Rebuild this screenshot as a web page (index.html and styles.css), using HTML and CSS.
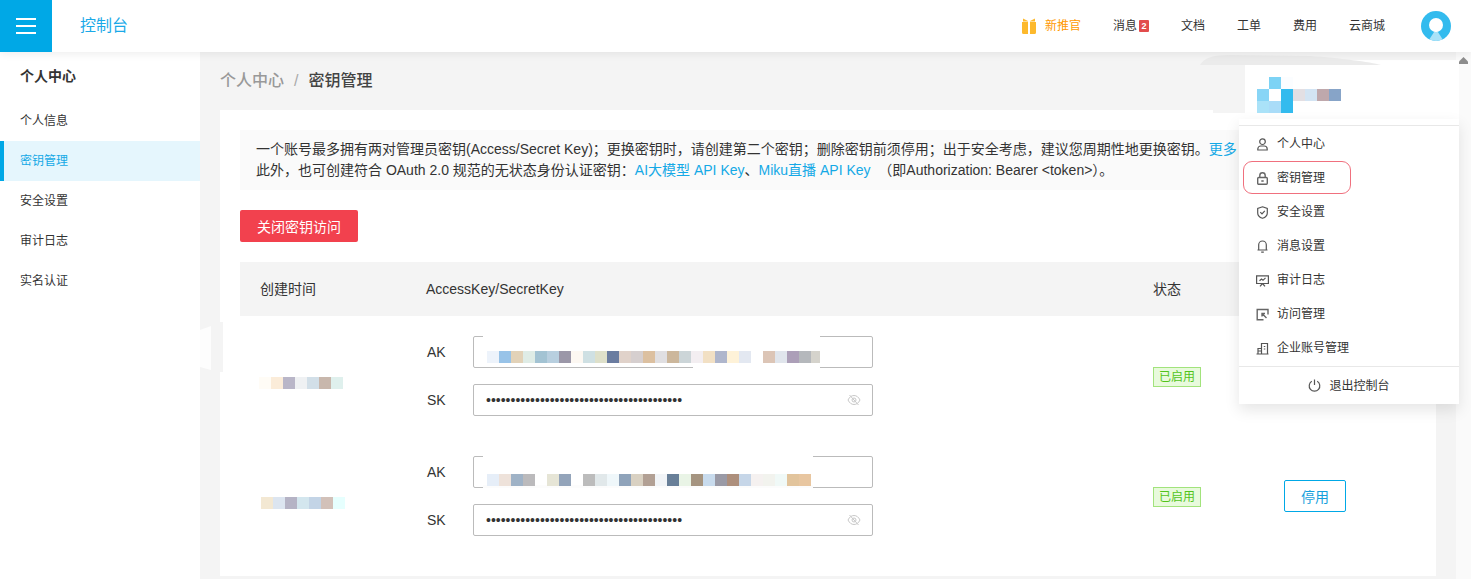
FILE: index.html
```html
<!DOCTYPE html>
<html lang="zh-CN">
<head>
<meta charset="utf-8">
<title>密钥管理</title>
<link rel="stylesheet" href="styles.css">
</head>
<body>
<header class="topbar">
  <button class="burger" aria-label="菜单"><i></i><i></i><i></i></button>
  <a class="brand">控制台</a>
  <nav class="topnav">
    <a class="promo">
      <svg width="14" height="16" viewBox="0 0 14 16"><path fill="#fdb92c" d="M0 4h6v12H1.500A1.500 1.500 0 0 1 0 14.500zM8 4h6v10.500a1.500 1.500 0 0 1-1.500 1.500H8zM1 .5l5 2.500v.5H1zM13 .5L8 3v.5h5z"/></svg>
      新推官
    </a>
    <a class="msg">消息<b class="badge">2</b></a>
    <a>文档</a>
    <a>工单</a>
    <a>费用</a>
    <a>云商城</a>
    <svg class="avatar" width="30" height="30" viewBox="0 0 30 30">
      <defs><clipPath id="ac"><circle cx="15" cy="15" r="15"/></clipPath></defs>
      <circle cx="15" cy="15" r="15" fill="#33bbee"/>
      <path clip-path="url(#ac)" d="M15 18L24 32H6z" fill="#a9e2f8"/>
      <circle cx="15" cy="14" r="7" fill="#fff"/>
    </svg>
  </nav>
</header>

<div class="layout">
  <aside class="sidebar">
    <h2 class="side-title">个人中心</h2>
    <a class="side-item">个人信息</a>
    <a class="side-item active">密钥管理</a>
    <a class="side-item">安全设置</a>
    <a class="side-item">审计日志</a>
    <a class="side-item">实名认证</a>
  </aside>

  <main class="main">
    <div class="crumbs"><span class="crumb-parent">个人中心</span><span class="crumb-sep">/</span><span class="crumb-current">密钥管理</span></div>
    <section class="card">
      <div class="notice">
        <p>一个账号最多拥有两对管理员密钥(Access/Secret Key)；更换密钥时，请创建第二个密钥；删除密钥前须停用；出于安全考虑，建议您周期性地更换密钥。<a>更多</a></p>
        <p>此外，也可创建符合 OAuth 2.0 规范的无状态身份认证密钥：<a>AI大模型 API Key</a>、<a>Miku直播 API Key</a> &nbsp;（即Authorization: Bearer &lt;token&gt;）。</p>
      </div>
      <button class="btn-danger">关闭密钥访问</button>

      <div class="table">
        <div class="tr head">
          <div>创建时间</div>
          <div>AccessKey/SecretKey</div>
          <div>状态</div>
          <div></div>
        </div>

        <div class="tr">
          <div class="date">
            <svg width="84" height="12"><rect x="0" width="12" height="12" fill="#fffcf6"/><rect x="12" width="12" height="12" fill="#fbecd9"/><rect x="24" width="12" height="12" fill="#b9b6c8"/><rect x="36" width="12" height="12" fill="#eff1f3"/><rect x="48" width="12" height="12" fill="#d2dfe8"/><rect x="60" width="12" height="12" fill="#c8b7ac"/><rect x="72" width="12" height="12" fill="#dff0ed"/></svg>
          </div>
          <div class="keys">
            <div class="key-row"><label>AK</label>
              <div class="field">
                <i class="mask mask-top"></i><i class="mask mask-bottom-a"></i>
                <svg class="blur" width="333" height="12"><rect x="0" width="12" height="12" fill="#edf3fb"/><rect x="12" width="12" height="12" fill="#98c3e8"/><rect x="24" width="12" height="12" fill="#e2d2b8"/><rect x="36" width="12" height="12" fill="#dfece6"/><rect x="48" width="12" height="12" fill="#a3c3d3"/><rect x="60" width="12" height="12" fill="#b8cfdf"/><rect x="72" width="12" height="12" fill="#9b97a8"/><rect x="84" width="12" height="12" fill="#fdf8f2"/><rect x="96" width="12" height="12" fill="#cfe0e3"/><rect x="108" width="12" height="12" fill="#dee0ca"/><rect x="120" width="12" height="12" fill="#6a7ca0"/><rect x="132" width="12" height="12" fill="#e0d2ca"/><rect x="144" width="12" height="12" fill="#d6cfcf"/><rect x="156" width="12" height="12" fill="#dcc0a0"/><rect x="168" width="12" height="12" fill="#e0dfe2"/><rect x="180" width="12" height="12" fill="#ccb79c"/><rect x="192" width="12" height="12" fill="#ccd5d8"/><rect x="204" width="12" height="12" fill="#f3eef1"/><rect x="216" width="12" height="12" fill="#f2e0c4"/><rect x="228" width="12" height="12" fill="#afb6cc"/><rect x="240" width="12" height="12" fill="#fef2d8"/><rect x="252" width="12" height="12" fill="#e3e8f1"/><rect x="276" width="12" height="12" fill="#dcc5b6"/><rect x="288" width="12" height="12" fill="#e0e5ec"/><rect x="300" width="12" height="12" fill="#ac9fb8"/><rect x="312" width="12" height="12" fill="#b5b8bc"/><rect x="324" width="9" height="12" fill="#d5d3cc"/></svg>
              </div>
            </div>
            <div class="key-row"><label>SK</label>
              <div class="field"><span class="dots">••••••••••••••••••••••••••••••••••••••••</span>
                <svg class="eye" width="14" height="14" viewBox="0 0 14 14"><path d="M1 7c1.500-3 3.500-4.500 6-4.500S11.500 4 13 7c-1.500 3-3.500 4.500-6 4.500S2.500 10 1 7zM2.500 2l9 10"/><circle cx="7" cy="7" r="2"/></svg>
              </div>
            </div>
          </div>
          <div class="status"><span class="tag">已启用</span></div>
          <div class="action"></div>
        </div>

        <div class="tr">
          <div class="date date-b">
            <svg width="84" height="12"><rect x="0" width="12" height="12" fill="#f3e8d3"/><rect x="12" width="12" height="12" fill="#dce5f0"/><rect x="24" width="12" height="12" fill="#b5b3c5"/><rect x="36" width="12" height="12" fill="#d3e6ee"/><rect x="48" width="12" height="12" fill="#c3d4e6"/><rect x="60" width="12" height="12" fill="#d2c1b9"/><rect x="72" width="12" height="12" fill="#e6fffe"/></svg>
          </div>
          <div class="keys">
            <div class="key-row"><label>AK</label>
              <div class="field">
                <i class="mask mask-top-b"></i><i class="mask mask-bottom-b"></i>
                <svg class="blur blur-b" width="324" height="12"><rect x="0" width="12" height="12" fill="#e6eef8"/><rect x="12" width="12" height="12" fill="#eee2da"/><rect x="24" width="12" height="12" fill="#9fb2c6"/><rect x="36" width="12" height="12" fill="#bbbabc"/><rect x="60" width="12" height="12" fill="#e6e5d6"/><rect x="72" width="12" height="12" fill="#93a4ba"/><rect x="96" width="12" height="12" fill="#bcbcbc"/><rect x="108" width="12" height="12" fill="#e1e8ea"/><rect x="120" width="12" height="12" fill="#eff7fa"/><rect x="132" width="12" height="12" fill="#8fa3ba"/><rect x="144" width="12" height="12" fill="#d9d1c2"/><rect x="156" width="12" height="12" fill="#b2a094"/><rect x="168" width="12" height="12" fill="#f1f4f7"/><rect x="180" width="12" height="12" fill="#687f98"/><rect x="192" width="12" height="12" fill="#e9f4e6"/><rect x="204" width="12" height="12" fill="#a59480"/><rect x="216" width="12" height="12" fill="#c8dbed"/><rect x="228" width="12" height="12" fill="#9a9aa6"/><rect x="240" width="12" height="12" fill="#ad8f7c"/><rect x="252" width="12" height="12" fill="#c6d6e8"/><rect x="264" width="12" height="12" fill="#f5f1f0"/><rect x="276" width="12" height="12" fill="#f2f3ee"/><rect x="288" width="12" height="12" fill="#f0f9f7"/><rect x="300" width="12" height="12" fill="#e2c49c"/><rect x="312" width="12" height="12" fill="#e8c6a0"/></svg>
              </div>
            </div>
            <div class="key-row"><label>SK</label>
              <div class="field"><span class="dots">••••••••••••••••••••••••••••••••••••••••</span>
                <svg class="eye" width="14" height="14" viewBox="0 0 14 14"><path d="M1 7c1.500-3 3.500-4.500 6-4.500S11.500 4 13 7c-1.500 3-3.500 4.500-6 4.500S2.500 10 1 7zM2.500 2l9 10"/><circle cx="7" cy="7" r="2"/></svg>
              </div>
            </div>
          </div>
          <div class="status"><span class="tag">已启用</span></div>
          <div class="action"><button class="btn-outline">停用</button></div>
        </div>
      </div>
    </section>
  </main>
  <div class="scrolltrack"></div>
</div>

<!-- Overlays -->
<svg class="arrow-up" width="9" height="7" viewBox="0 0 9 7"><path d="M4.500 0L9 4.500V7H0V4.500z" fill="#8c8c8c"/></svg>
<svg class="menu-swoosh" width="260" height="14" viewBox="0 0 260 14"><rect x="60" y="8" width="199" height="6" fill="#fff"/><path d="M0 13C4 6 12 3 30 3L110 4C140 6 170 10 181 13z" fill="#ebebeb"/></svg>
<div class="card-notch"></div>
<div class="collapse-tab"></div>
<div class="collapse-edge"></div>

<div class="menu">
  <div class="menu-user">
    <svg width="84" height="36"><rect x="12" y="0" width="12" height="12" fill="#7dd3f5"/><rect x="24" y="0" width="12" height="12" fill="#fbfdff"/><rect x="0" y="12" width="12" height="12" fill="#88d5f6"/><rect x="24" y="12" width="12" height="12" fill="#33bbee"/><rect x="36" y="12" width="12" height="12" fill="#e3dfe3"/><rect x="48" y="12" width="12" height="12" fill="#d3e4f3"/><rect x="60" y="12" width="12" height="12" fill="#bfa8ac"/><rect x="72" y="12" width="12" height="12" fill="#87a4c8"/><rect x="0" y="24" width="12" height="12" fill="#aae2f8"/><rect x="12" y="24" width="12" height="12" fill="#a9dcf8"/><rect x="24" y="24" width="12" height="12" fill="#33bbee"/></svg>
  </div>
  <div class="menu-body">
    <ul class="menu-list">
      <li><svg viewBox="0 0 13 13"><circle cx="6.500" cy="3.700" r="2.800"/><path d="M1.800 12v-1a3 3 0 0 1 3-3h3.400a3 3 0 0 1 3 3v1z"/></svg>个人中心</li>
      <li><svg class="thick" viewBox="0 0 13 13"><rect x="1.700" y="5.500" width="9.600" height="6.800" rx="1"/><path d="M3.800 5.500V3.500a2.700 2.700 0 0 1 5.400 0v2M5.300 9h2.400"/></svg>密钥管理</li>
      <li><svg viewBox="0 0 13 13"><path d="M6.500.8L11.300 2.500V7C11.300 9.700 9 11.500 6.500 12.300 4 11.500 1.700 9.700 1.700 7V2.500zM4.300 6.200l1.700 1.700 2.800-3"/></svg>安全设置</li>
      <li><svg viewBox="0 0 13 13"><path d="M2.700 10V4.800a3.800 3.800 0 0 1 7.600 0V10M1.500 10h10M5.200 12.200h2.600"/></svg>消息设置</li>
      <li><svg viewBox="0 0 13 13"><path d="M.6 1.800h11.800v7.700H.6zM6.500 9.500L4 12.300M6.500 9.500L9 12.300M3.500 6.800l2-1.800 1.500 1.300 2.500-2.500"/></svg>审计日志</li>
      <li><svg class="thick" viewBox="0 0 13 13"><path d="M12 6.500V1.500H1.200v10.300h6.300M6 5.500l4.500 4.500M6 8.500v-3h3"/></svg>访问管理</li>
      <li><svg viewBox="0 0 13 13"><path d="M.5 12h12M2 12V6.500h3.500M5.500 12V1.500h6V12M2 9h3.500M7.800 4.500h1.500M7.800 7h1.500"/></svg>企业账号管理</li>
    </ul>
    <div class="menu-foot"><svg viewBox="0 0 13 13"><path d="M3.800 2.300a5.300 5.300 0 1 0 5.400 0M6.500.6V6"/></svg>退出控制台</div>
  </div>
</div>
<div class="highlight"></div>
</body>
</html>
```

FILE: styles.css
```css
* { box-sizing: border-box; }
html, body { margin: 0; height: 579px; overflow: hidden; }
body {
  position: relative;
  background: #fff;
  color: #333;
  font: 12px/1.5 "Liberation Sans", "Noto Sans CJK SC", sans-serif;
}
p, h2, ul { margin: 0; padding: 0; }
a { color: inherit; text-decoration: none; }
button { font-family: inherit; cursor: pointer; }

/* top bar */
.topbar {
  position: relative;
  z-index: 2;
  display: flex;
  align-items: center;
  height: 52px;
  background: #fff;
  box-shadow: 0 2px 8px rgba(0, 0, 0, .07);
}
.burger {
  display: flex;
  flex-direction: column;
  justify-content: center;
  align-items: center;
  gap: 5px;
  width: 52px;
  height: 52px;
  padding: 0;
  border: 0;
  background: #00a8e6;
}
.burger i { display: block; width: 20px; height: 2px; background: #fff; }
.brand { margin-left: 28px; font-size: 16px; color: #1aa9e8; }
.topnav { display: flex; align-items: center; gap: 32px; margin-left: auto; padding-right: 20px; }
.promo { display: flex; align-items: center; gap: 9px; color: #f90; }
.msg { display: flex; align-items: center; gap: 2px; }
.badge {
  width: 10px;
  height: 12px;
  border-radius: 1px;
  background: #e24c4c;
  color: #fff;
  font-size: 9px;
  line-height: 12px;
  text-align: center;
}
.avatar { display: block; margin-left: 4px; }

/* layout */
.layout { display: flex; height: 527px; }
.sidebar { flex: none; width: 200px; background: #fff; }
.side-title { height: 49px; padding-top: 14px; font-size: 14px; line-height: 21px; font-weight: 700; color: #333; padding-left: 20px; }
.side-item { display: block; height: 40px; padding-left: 20px; line-height: 40px; }
.side-item.active { padding-left: 16px; border-left: 4px solid #00a8e6; background: #e5f6fd; color: #14a9e6; }

.main { flex: 1; min-width: 0; padding: 0 20px; background: #f4f4f4; }
.scrolltrack { flex: none; width: 15px; background: #fafafa; }
.crumbs { display: flex; align-items: center; height: 58px; font-size: 16px; font-weight: 500; }
.crumb-parent { color: #999; }
.crumb-sep { margin: 0 10px; color: #aaa; font-weight: 400; }
.crumb-current { color: #444; }

.card { height: 466px; padding: 20px; background: #fff; overflow: hidden; }
.notice { height: 60px; margin-bottom: 20px; padding: 9px 16px; background: #fafafa; font-size: 14px; line-height: 21px; white-space: nowrap; overflow: hidden; }
.notice a { color: #14a9e6; }
.btn-danger {
  display: block;
  width: 118px;
  height: 32px;
  margin-bottom: 20px;
  border: 0;
  border-radius: 2px;
  background: #f2414e;
  color: #fff;
  font-size: 14px;
}

/* table */
.table { font-size: 14px; }
.tr { display: grid; grid-template-columns: 186px 727px 131px 132px; height: 120px; }
.tr.head { height: 54px; background: #f4f4f4; align-items: center; }
.tr.head > div:first-child { padding-left: 20px; }
.date { align-self: center; margin-top: 14px; padding-left: 19px; height: 12px; }
.date-b { padding-left: 21px; }
.date svg, .menu-user svg { display: block; }
.keys { display: flex; flex-direction: column; gap: 16px; padding-top: 20px; }
.key-row { display: flex; align-items: center; height: 32px; }
.key-row label { width: 47px; padding-left: 1px; }
.field {
  position: relative;
  display: flex;
  align-items: center;
  width: 400px;
  height: 32px;
  padding-left: 12px;
  border: 1px solid #bbb;
  border-radius: 2px;
  background: #fff;
}
.dots { font-size: 14px; letter-spacing: 0; color: #333; }
.eye { position: absolute; top: 8px; right: 11px; fill: none; stroke: #c8c8c8; stroke-width: 1; }
.blur { position: absolute; left: 13px; top: 14px; display: block; }
.blur-b { top: 17px; }
.mask { position: absolute; background: #fff; }
.mask-top { left: 9px; top: -1px; width: 337px; height: 14px; }
.mask-bottom-a { left: 219px; bottom: -1px; width: 127px; height: 3px; }
.mask-top-b { left: 9px; top: -1px; width: 330px; height: 14px; }
.mask-bottom-b { left: 9px; bottom: -1px; width: 330px; height: 3px; background: #fcfcfc; }
.status { align-self: center; margin-top: 2px; }
.tag {
  display: block;
  width: 48px;
  height: 20px;
  border: 1px solid #a2e37c;
  background: #e8fadc;
  color: #52c41a;
  font-size: 12px;
  line-height: 18px;
  text-align: center;
}
.action { align-self: center; }
.btn-outline {
  display: block;
  width: 62px;
  height: 32px;
  border: 1px solid #00a8e6;
  border-radius: 2px;
  background: #fff;
  color: #14a0dc;
  font-size: 14px;
}

/* overlays from the screenshot */
.arrow-up { position: absolute; left: 1459px; top: 57px; z-index: 4; }
.menu-swoosh { position: absolute; left: 1200px; top: 52px; z-index: 1; }
.card-notch { position: absolute; left: 1213px; top: 110px; width: 32px; height: 3px; background: #f4f4f4; }
.collapse-tab {
  position: absolute;
  left: 200px;
  top: 326px;
  width: 11px;
  height: 44px;
  background: #fdfdfd;
  clip-path: polygon(0 4px, 100% 0, 100% 100%, 0 41px);
}
.collapse-edge { position: absolute; left: 220px; top: 322px; width: 3px; height: 50px; background: #f4f4f4; }

/* dropdown */
.menu { position: absolute; left: 1239px; top: 65px; z-index: 3; width: 220px; }
.menu-user { margin-left: 6px; height: 54px; padding: 12px 0 0 12px; background: #fff; }
.menu-body { background: #fff; box-shadow: 0 6px 14px rgba(0, 0, 0, .1); }
.menu-list { list-style: none; padding: 8px 0 1px; background: linear-gradient(#fff 6px, #e8e8e8 6px, #e8e8e8 7px, #fff 7px); border-bottom: 1px solid #e8e8e8; }
.menu-list li { display: flex; align-items: center; gap: 8px; height: 34px; padding-left: 17px; }
.menu-list svg, .menu-foot svg { flex: none; width: 13px; height: 13px; fill: none; stroke: #555; stroke-width: 1.200; }
.menu-list svg.thick { stroke-width: 1.400; stroke: #666; }
.menu-foot { display: flex; align-items: center; justify-content: center; gap: 8px; height: 37px; }
.highlight { position: absolute; left: 1243px; top: 161px; z-index: 4; width: 108px; height: 33px; border: 1px solid #f0707e; border-radius: 9px; }
```
